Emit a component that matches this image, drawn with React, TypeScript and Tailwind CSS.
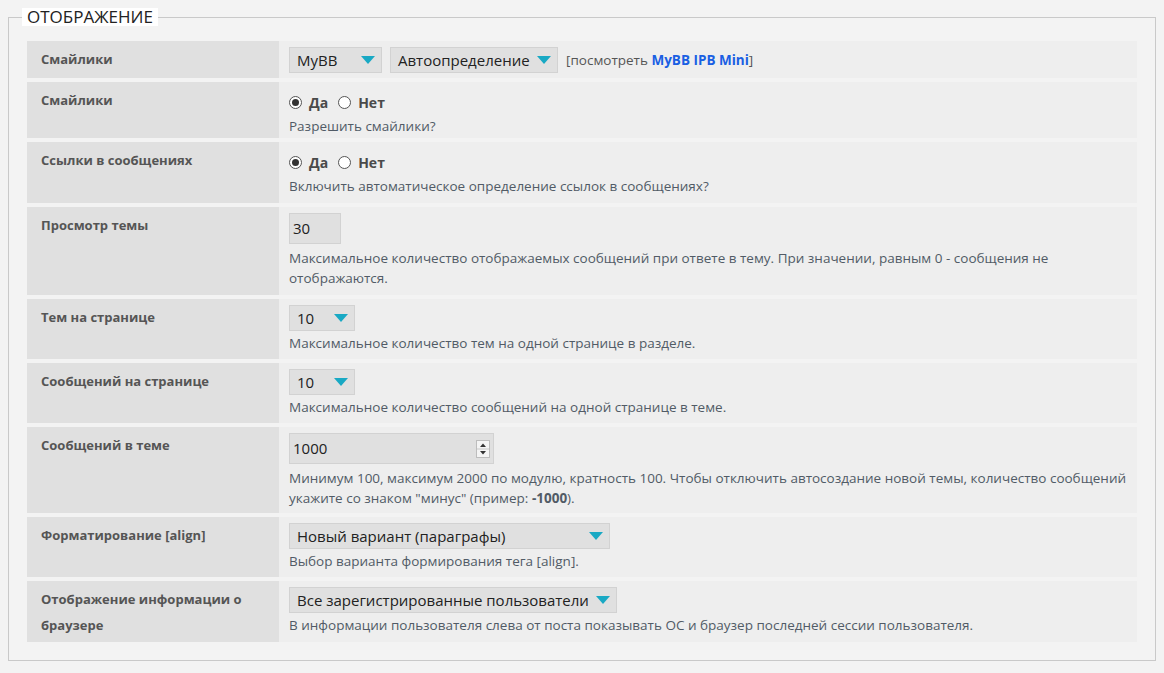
import React from "react";

const Arrow = () => (
  <svg width="14" height="8" viewBox="0 0 14 8" className="shrink-0">
    <path d="M0 0 L14 0 L7 8 Z" fill="#19a9c4" />
  </svg>
);

const Select = ({ value, className }: { value: string; className: string }) => (
  <div
    className={
      "flex h-[26px] items-center justify-between border border-[#d2d2d2] bg-[#e0e0e0] pl-[7px] pr-[6px] text-[15px] text-[#222] " +
      className
    }
  >
    <span>{value}</span>
    <Arrow />
  </div>
);

const Radio = ({ checked }: { checked?: boolean }) => (
  <span className="flex h-[13px] w-[13px] items-center justify-center rounded-full border border-[#555] bg-white">
    {checked && <span className="h-[7px] w-[7px] rounded-full bg-[#333]" />}
  </span>
);

const YesNo = () => (
  <div className="flex h-[28px] items-center text-[14px] font-bold text-[#4a4a4a]">
    <Radio checked />
    <span className="ml-[7px]">Да</span>
    <span className="ml-[10px]">
      <Radio />
    </span>
    <span className="ml-[7px]">Нет</span>
  </div>
);

const Desc = ({ children, className }: { children: React.ReactNode; className?: string }) => (
  <p className={"text-[13.5px] leading-[20px] text-[#515b66] " + (className || "")}>{children}</p>
);

const Row = ({
  label,
  height,
  children,
}: {
  label: React.ReactNode;
  height: string;
  children: React.ReactNode;
}) => (
  <div className={"flex " + height}>
    <div className="w-[252px] shrink-0 bg-[#e0e0e0] pl-[14px] pr-[10px] pt-[5px] text-[13px] font-bold leading-[26px] text-[#555]">
      {label}
    </div>
    <div className="flex-1 bg-[#eeeeee] pl-[10px] pr-[10px] pt-[6px]">{children}</div>
  </div>
);

export default function App() {
  return (
    <div
      className="min-h-screen bg-[#f3f3f3] px-[8px] pt-[8px] pb-[10px]"
      style={{ fontFamily: '"Open Sans", "Noto Sans", sans-serif' }}
    >
      <fieldset className="border border-[#c9c9c9] px-[18px] pt-[15px] pb-[18px]">
        <legend className="-ml-[5px] bg-white px-[5px] text-[17px] leading-[18px] text-[#222]">
          ОТОБРАЖЕНИЕ
        </legend>
        <div className="flex flex-col gap-[4px]">
          <Row label="Смайлики" height="h-[37px]">
            <div className="flex items-center gap-[8px]">
              <Select value="MyBB" className="w-[93px]" />
              <Select value="Автоопределение" className="w-[168px]" />
              <span className="text-[13.5px] text-[#555]">
                [посмотреть <span className="font-bold text-[#1a5fe3]">MyBB IPB Mini</span>]
              </span>
            </div>
          </Row>
          <Row label="Смайлики" height="h-[56px]">
            <YesNo />
            <Desc>Разрешить смайлики?</Desc>
          </Row>
          <Row label="Ссылки в сообщениях" height="h-[61px]">
            <YesNo />
            <Desc>Включить автоматическое определение ссылок в сообщениях?</Desc>
          </Row>
          <Row label="Просмотр темы" height="h-[88px]">
            <div className="flex h-[31px] w-[52px] items-center border border-[#d2d2d2] bg-[#e0e0e0] pl-[3px] text-[15px] text-[#222]">
              30
            </div>
            <Desc className="mt-[4px]">
              Максимальное количество отображаемых сообщений при ответе в тему. При значении, равным 0 - сообщения не
              отображаются.
            </Desc>
          </Row>
          <Row label="Тем на странице" height="h-[60px]">
            <Select value="10" className="w-[66px]" />
            <Desc className="mt-[2px]">Максимальное количество тем на одной странице в разделе.</Desc>
          </Row>
          <Row label="Сообщений на странице" height="h-[60px]">
            <Select value="10" className="w-[66px]" />
            <Desc className="mt-[2px]">Максимальное количество сообщений на одной странице в теме.</Desc>
          </Row>
          <Row label="Сообщений в теме" height="h-[86px]">
            <div className="flex h-[31px] w-[205px] items-center justify-between border border-[#d2d2d2] bg-[#e0e0e0] pl-[3px] pr-[3px] text-[15px] text-[#222]">
              <span>1000</span>
              <svg width="14" height="18" viewBox="0 0 14 18">
                <rect x="0.5" y="0.5" width="13" height="17" fill="#f4f4f4" stroke="#bdbdbd" />
                <line x1="1" y1="9" x2="13" y2="9" stroke="#c8c8c8" />
                <path d="M4 7 L10 7 L7 3.5 Z" fill="#333" />
                <path d="M4 11 L10 11 L7 14.5 Z" fill="#333" />
              </svg>
            </div>
            <Desc className="mt-[4px]">
              Минимум 100, максимум 2000 по модулю, кратность 100. Чтобы отключить автосоздание новой темы, количество
              сообщений укажите со знаком "минус" (пример: <b>-1000</b>).
            </Desc>
          </Row>
          <Row label="Форматирование [align]" height="h-[60px]">
            <Select value="Новый вариант (параграфы)" className="w-[321px]" />
            <Desc className="mt-[2px]">Выбор варианта формирования тега [align].</Desc>
          </Row>
          <Row label="Отображение информации о браузере" height="h-[61px]">
            <Select value="Все зарегистрированные пользователи" className="w-[328px]" />
            <Desc className="mt-[2px]">
              В информации пользователя слева от поста показывать ОС и браузер последней сессии пользователя.
            </Desc>
          </Row>
        </div>
      </fieldset>
    </div>
  );
}
